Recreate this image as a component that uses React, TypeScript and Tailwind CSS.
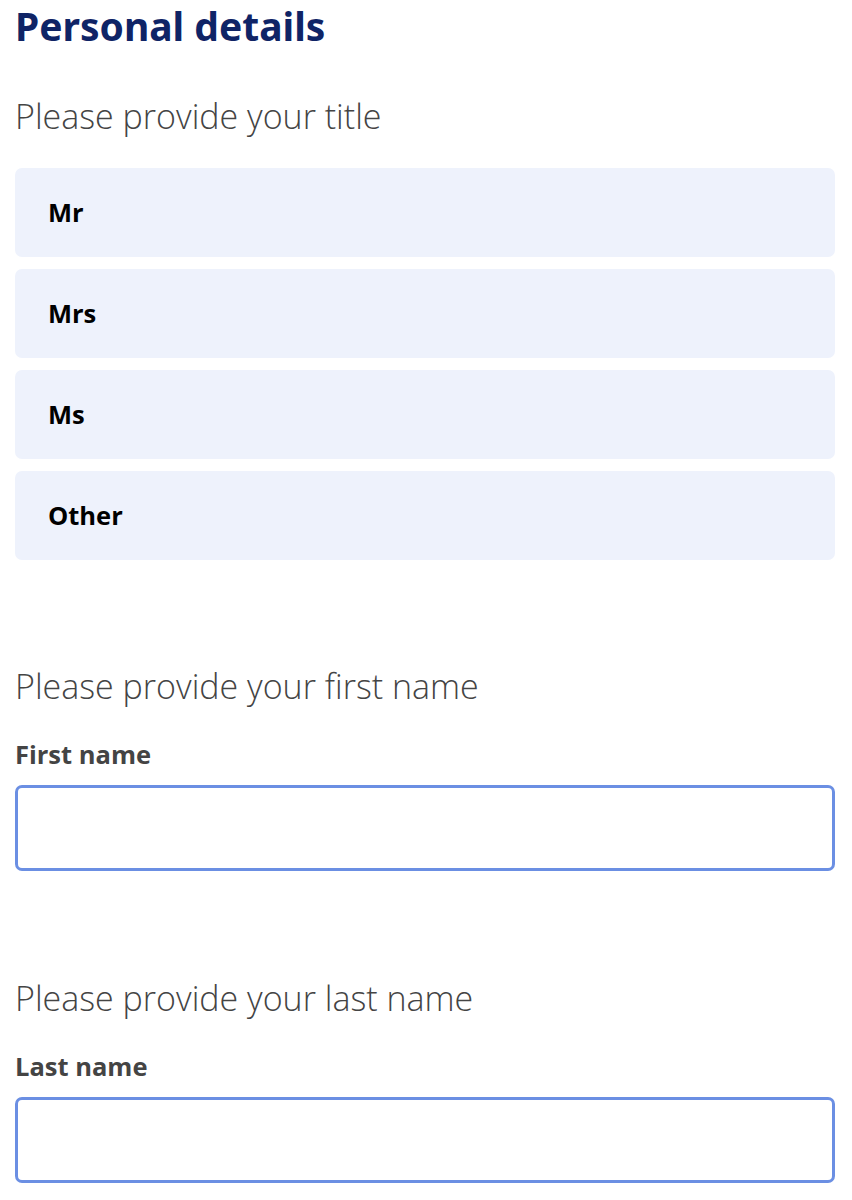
const titles = ['Mr', 'Mrs', 'Ms', 'Other'];

function Question({ children }: { children: string }) {
  return (
    <h2 className="font-['Open_Sans',sans-serif] font-light text-[34px] leading-[40px] text-[#444444]">
      {children}
    </h2>
  );
}

function TextField({ label, id }: { label: string; id: string }) {
  return (
    <div className="flex flex-col">
      <label htmlFor={id} className="mt-[3px] mb-[14px] font-['Open_Sans',sans-serif] font-bold text-[25.5px] leading-[34px] text-[#444444]">
        {label}
      </label>
      <input
        id={id}
        type="text"
        className="h-[86px] w-full rounded-[7px] border-[3px] border-[#6b8fe3] bg-white px-4 text-[22px] outline-none"
      />
    </div>
  );
}

export default function App() {
  return (
    <div className="min-h-screen bg-white px-[15px] pr-[17px] font-['Open_Sans',sans-serif]">
      {/* page header */}
      <h1 className="font-['Noto_Sans',sans-serif] font-bold text-[39px] leading-[52px] text-[#0f2466]">
        Personal details
      </h1>

      <section className="mt-[44px]">
        <Question>Please provide your title</Question>
        <div className="mt-[32px] flex flex-col gap-[12px]">
          {titles.map((t) => (
            <button
              key={t}
              type="button"
              className="h-[89px] w-full rounded-[7px] bg-[#eef2fc] pl-[33px] text-left font-bold text-[25.5px] text-black"
            >
              {t}
            </button>
          ))}
        </div>
      </section>

      <section className="mt-[106px]">
        <Question>Please provide your first name</Question>
        <div className="mt-[28px]">
          <TextField label="First name" id="first-name" />
        </div>
      </section>

      <section className="mt-[107px]">
        <Question>Please provide your last name</Question>
        <div className="mt-[28px]">
          <TextField label="Last name" id="last-name" />
        </div>
      </section>
    </div>
  );
}
